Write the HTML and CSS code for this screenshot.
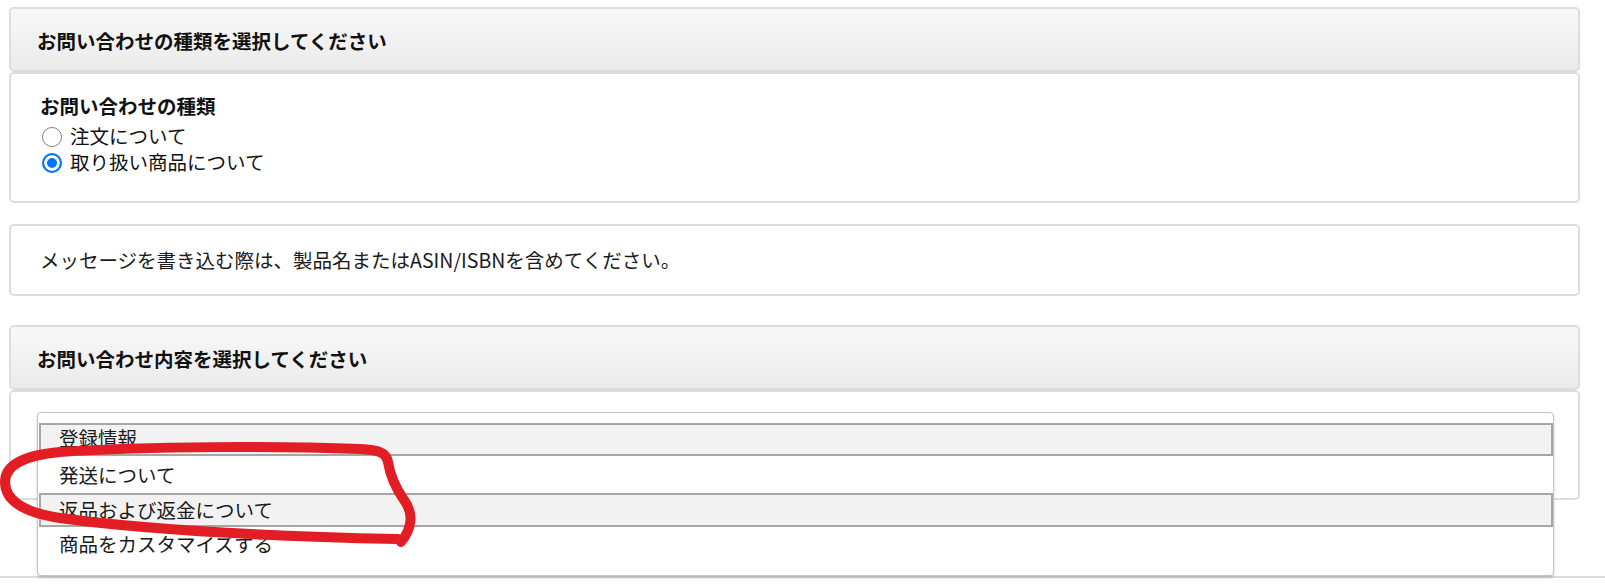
FILE: index.html
```html
<!DOCTYPE html>
<html lang="ja">
<head>
<meta charset="utf-8">
<title>お問い合わせ</title>
<link rel="stylesheet" href="styles.css">
</head>
<body>
<div class="page">
  <section class="group">
    <div class="box-head"><h2 class="head-title">お問い合わせの種類を選択してください</h2></div>
    <div class="box-body type-body">
      <div class="field-label">お問い合わせの種類</div>
      <label class="radio-row"><span class="radio"></span>注文について</label>
      <label class="radio-row"><span class="radio checked"></span>取り扱い商品について</label>
    </div>
  </section>

  <div class="notice">メッセージを書き込む際は、製品名またはASIN/ISBNを含めてください。</div>

  <section class="group">
    <div class="box-head"><h2 class="head-title">お問い合わせ内容を選択してください</h2></div>
    <div class="box-body content-body">
      <ul class="dropdown">
        <li class="opt hl first">登録情報</li>
        <li class="opt tall">発送について</li>
        <li class="opt hl">返品および返金について</li>
        <li class="opt">商品をカスタマイズする</li>
      </ul>
    </div>
  </section>
</div>
<div class="divider"></div>

<svg class="annotation" width="1605" height="584" viewBox="0 0 1605 584" xmlns="http://www.w3.org/2000/svg">
  <path d="M 401 542 C 413 527, 413 512, 404 500 C 395 487, 390 475, 388 462 C 386 452, 378 450, 360 449 C 280 446, 150 446, 60 452 C 25 455, 5 465, 5 482 C 5 498, 20 512, 60 518 C 140 529, 260 536, 398 539" fill="none" stroke="#e21d23" stroke-width="10" stroke-linecap="round" stroke-linejoin="round"/>
</svg>
</body>
</html>
```

FILE: styles.css
```css
* {
  box-sizing: border-box;
}

html, body {
  margin: 0;
  padding: 0;
  background: #ffffff;
}

body {
  font-family: "Noto Sans CJK JP", "Noto Sans", sans-serif;
  font-size: 19.5px;
  color: #111111;
  position: relative;
  width: 1605px;
  height: 584px;
  overflow: hidden;
}

.page {
  width: 1571px;
  margin-left: 9px;
  padding-top: 7px;
}

.box-head {
  height: 65px;
  border: 2px solid #dddddd;
  border-radius: 5px;
  background: linear-gradient(#f8f8f8, #ebebeb);
  display: flex;
  align-items: center;
  padding: 2px 0 0 26px;
}

.head-title {
  margin: 0;
  font-size: 19.5px;
  font-weight: 700;
  line-height: 26px;
  color: #111111;
}

.box-body {
  border: 2px solid #dddddd;
  border-radius: 5px;
  background: #ffffff;
}

.type-body {
  height: 131px;
  padding: 19px 0 0 29px;
}

.field-label {
  font-weight: 700;
  line-height: 26px;
  margin-bottom: 4px;
}

.radio-row {
  display: flex;
  align-items: center;
  line-height: 26px;
}

.radio {
  width: 20px;
  height: 20px;
  border-radius: 50%;
  border: 1.5px solid #808080;
  background: #ffffff;
  margin: 2px 8px 0 2px;
  flex: none;
}

.radio.checked {
  border: 2px solid #0075ff;
  background: #0075ff;
  box-shadow: inset 0 0 0 3px #ffffff;
}

.notice {
  margin-top: 21px;
  height: 72px;
  border: 2px solid #dddddd;
  border-radius: 5px;
  padding: 21px 0 0 29px;
  line-height: 26px;
  color: #1a1a1a;
}

.group + .notice + .group {
  margin-top: 29px;
}

.content-body {
  height: 110px;
  position: relative;
}

.dropdown {
  position: absolute;
  top: 20px;
  left: 26px;
  width: 1517px;
  height: 164px;
  margin: 0;
  padding: 10px 0 0 1px;
  list-style: none;
  background: #ffffff;
  border: 1px solid #c4c4c4;
  border-radius: 4px;
  box-shadow: 0 2px 3px rgba(0, 0, 0, 0.18);
  z-index: 2;
}

.opt {
  height: 34px;
  line-height: 30px;
  padding-left: 18px;
  border: 2px solid transparent;
  white-space: nowrap;
  overflow: hidden;
  color: #1a1a1a;
}

.opt.hl {
  background: #f2f2f2;
  border-color: #a6a6a6;
}

.opt.first {
  height: 33px;
  line-height: 25px;
}

.opt.tall {
  height: 37px;
  line-height: 34px;
}

.divider {
  margin-top: 76px;
  height: 2px;
  background: #dddddd;
}

.annotation {
  position: absolute;
  top: 0;
  left: 0;
  pointer-events: none;
  z-index: 5;
}
```
